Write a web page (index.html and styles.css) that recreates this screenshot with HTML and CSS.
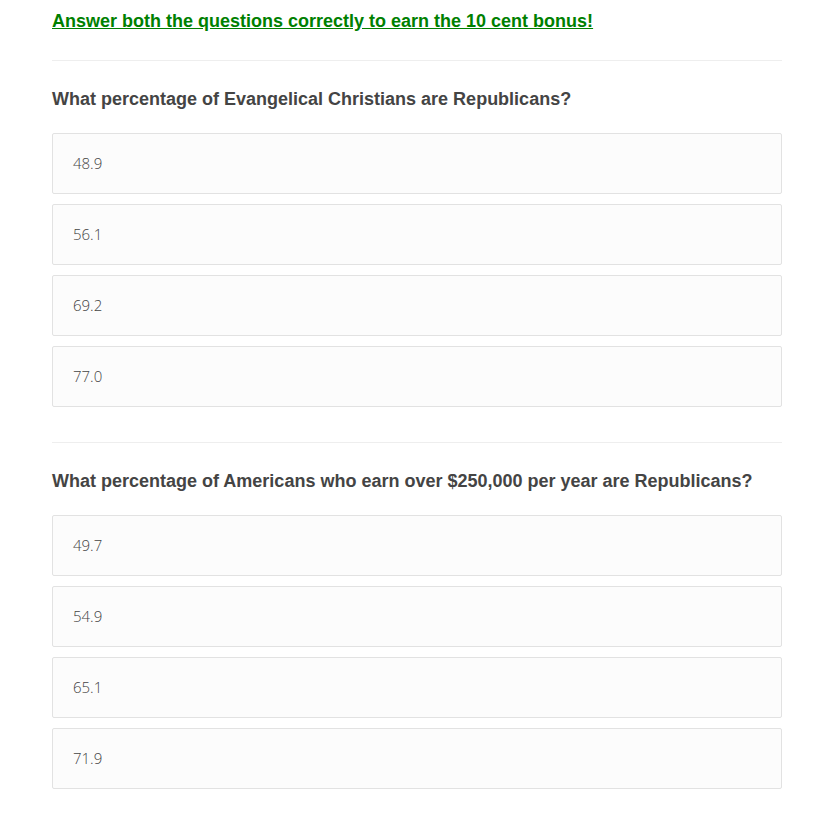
FILE: index.html
```html
<!DOCTYPE html>
<html>
<head>
<meta charset="utf-8">
<link rel="stylesheet" href="styles.css">
</head>
<body>
<div class="page">
  <h2 class="bonus"><a href="#">Answer both the questions correctly to earn the 10 cent bonus!</a></h2>
  <section class="question">
    <h3 class="q-title">What percentage of Evangelical Christians are Republicans?</h3>
    <div class="options">
      <div class="option">48.9</div>
      <div class="option">56.1</div>
      <div class="option">69.2</div>
      <div class="option">77.0</div>
    </div>
  </section>
  <section class="question">
    <h3 class="q-title">What percentage of Americans who earn over $250,000 per year are Republicans?</h3>
    <div class="options">
      <div class="option">49.7</div>
      <div class="option">54.9</div>
      <div class="option">65.1</div>
      <div class="option">71.9</div>
    </div>
  </section>
</div>
</body>
</html>
```
FILE: styles.css
```css
html, body { margin: 0; padding: 0; background: #fff; }
.page {
  width: 730px;
  margin-left: 52px;
  font-family: "Liberation Sans", Arial, sans-serif;
}
.bonus {
  margin: 0;
  padding-top: 11px;
  height: 49px;
  font-size: 18px;
  line-height: 20px;
  font-weight: bold;
}
.bonus a { color: #008000; text-decoration: underline; }
.question {
  border-top: 1px solid #eeeeee;
  padding-top: 27px;
  padding-bottom: 35px;
}
.q-title {
  margin: 0 0 23px 0;
  font-size: 18px;
  line-height: 22px;
  font-weight: bold;
  color: #444444;
}
.options { display: flex; flex-direction: column; gap: 10px; }
.option {
  height: 57px;
  border: 1px solid #e2e2e2;
  border-radius: 2px;
  background: #fcfcfc;
  box-sizing: content-box;
  padding: 0 20px 2px 20px;
  display: flex;
  align-items: center;
  font-family: "Open Sans", sans-serif;
  font-weight: 300;
  font-size: 15px;
  color: #444444;
}
```
